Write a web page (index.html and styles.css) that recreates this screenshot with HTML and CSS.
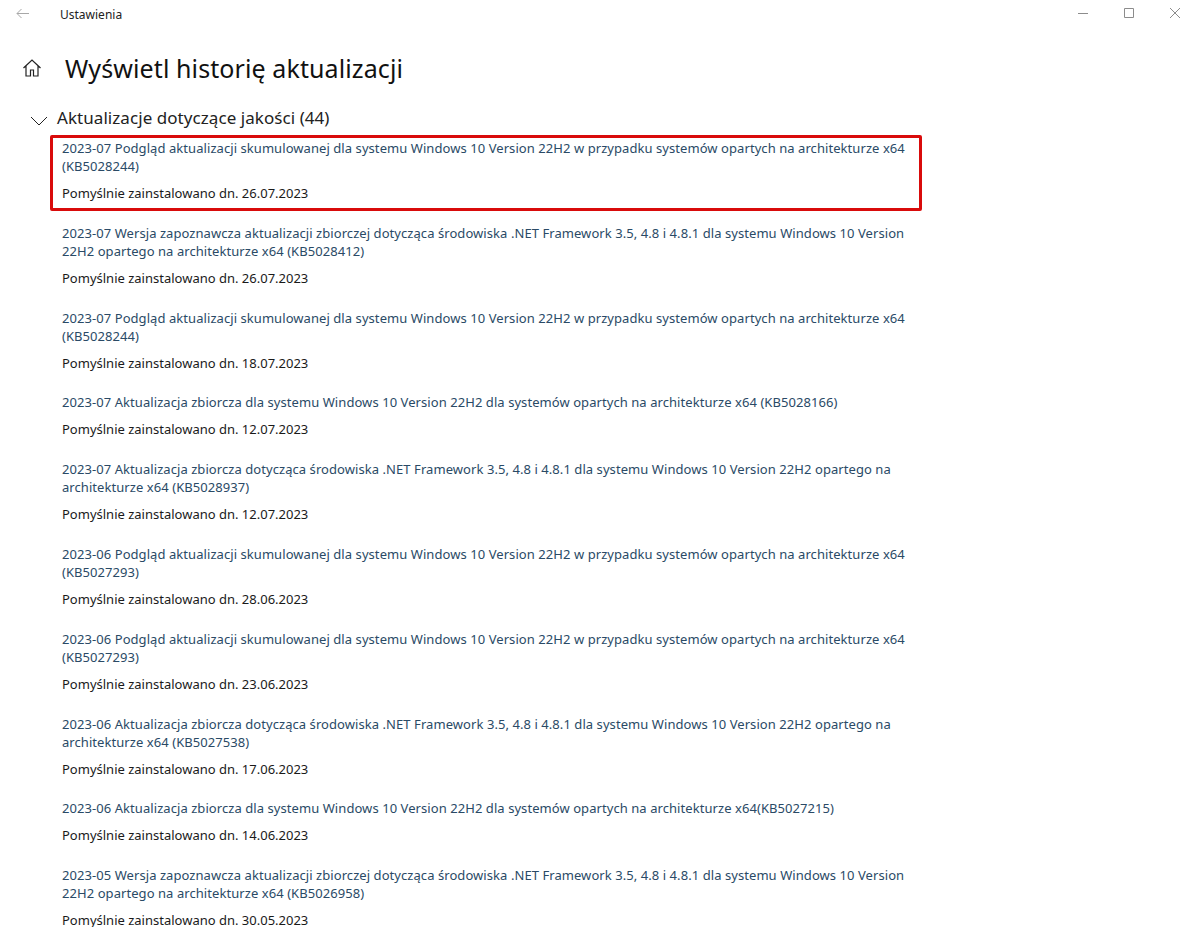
FILE: index.html
```html
<!DOCTYPE html>
<html lang="pl">
<head>
    <meta charset="UTF-8">
    <title>Ustawienia</title>
    <link rel="stylesheet" href="styles.css">
</head>
<body>

<div class="titlebar">
    <svg class="back-icon" width="14" height="12" viewBox="0 0 14 12"><path d="M5.500 1 1 5.500 5.500 10M1 5.500H13"/></svg>
    <span class="app-name">Ustawienia</span>
    <div class="window-btns">
        <svg width="12" height="12" viewBox="0 0 12 12"><path d="M1 6.500H11"/></svg>
        <svg width="12" height="12" viewBox="0 0 12 12"><path d="M1.500 1.500H10.500V10.500H1.500Z"/></svg>
        <svg width="12" height="12" viewBox="0 0 12 12"><path d="M1 1 11 11M11 1 1 11"/></svg>
    </div>
</div>

<div class="page-head">
    <svg class="home-icon" width="20" height="20" viewBox="0 0 20 20"><path d="M1.500 10 10 2l8.500 8M4 8v10h4.500v-6h3v6H16V8"/></svg>
    <h1>Wyświetl historię aktualizacji</h1>
</div>

<div class="group-head">
    <svg class="chevron" width="18" height="10" viewBox="0 0 18 10"><path d="M1 1l8 8 8-8"/></svg>
    <h2>Aktualizacje dotyczące jakości (44)</h2>
</div>

<div class="update-list">
    <div class="update-item marked">
        <a class="update-link">2023-07 Podgląd aktualizacji skumulowanej dla systemu Windows 10 Version 22H2 w przypadku systemów opartych na architekturze x64 (KB5028244)</a>
        <p class="update-status">Pomyślnie zainstalowano dn. 26.07.2023</p>
    </div>
    <div class="update-item">
        <a class="update-link">2023-07 Wersja zapoznawcza aktualizacji zbiorczej dotycząca środowiska .NET Framework 3.5, 4.8 i 4.8.1 dla systemu Windows 10 Version 22H2 opartego na architekturze x64 (KB5028412)</a>
        <p class="update-status">Pomyślnie zainstalowano dn. 26.07.2023</p>
    </div>
    <div class="update-item">
        <a class="update-link">2023-07 Podgląd aktualizacji skumulowanej dla systemu Windows 10 Version 22H2 w przypadku systemów opartych na architekturze x64 (KB5028244)</a>
        <p class="update-status">Pomyślnie zainstalowano dn. 18.07.2023</p>
    </div>
    <div class="update-item">
        <a class="update-link">2023-07 Aktualizacja zbiorcza dla systemu Windows 10 Version 22H2 dla systemów opartych na architekturze x64 (KB5028166)</a>
        <p class="update-status">Pomyślnie zainstalowano dn. 12.07.2023</p>
    </div>
    <div class="update-item">
        <a class="update-link">2023-07 Aktualizacja zbiorcza dotycząca środowiska .NET Framework 3.5, 4.8 i 4.8.1 dla systemu Windows 10 Version 22H2 opartego na architekturze x64 (KB5028937)</a>
        <p class="update-status">Pomyślnie zainstalowano dn. 12.07.2023</p>
    </div>
    <div class="update-item">
        <a class="update-link">2023-06 Podgląd aktualizacji skumulowanej dla systemu Windows 10 Version 22H2 w przypadku systemów opartych na architekturze x64 (KB5027293)</a>
        <p class="update-status">Pomyślnie zainstalowano dn. 28.06.2023</p>
    </div>
    <div class="update-item">
        <a class="update-link">2023-06 Podgląd aktualizacji skumulowanej dla systemu Windows 10 Version 22H2 w przypadku systemów opartych na architekturze x64 (KB5027293)</a>
        <p class="update-status">Pomyślnie zainstalowano dn. 23.06.2023</p>
    </div>
    <div class="update-item">
        <a class="update-link">2023-06 Aktualizacja zbiorcza dotycząca środowiska .NET Framework 3.5, 4.8 i 4.8.1 dla systemu Windows 10 Version 22H2 opartego na architekturze x64 (KB5027538)</a>
        <p class="update-status">Pomyślnie zainstalowano dn. 17.06.2023</p>
    </div>
    <div class="update-item">
        <a class="update-link">2023-06 Aktualizacja zbiorcza dla systemu Windows 10 Version 22H2 dla systemów opartych na architekturze x64(KB5027215)</a>
        <p class="update-status">Pomyślnie zainstalowano dn. 14.06.2023</p>
    </div>
    <div class="update-item">
        <a class="update-link">2023-05 Wersja zapoznawcza aktualizacji zbiorczej dotycząca środowiska .NET Framework 3.5, 4.8 i 4.8.1 dla systemu Windows 10 Version 22H2 opartego na architekturze x64 (KB5026958)</a>
        <p class="update-status">Pomyślnie zainstalowano dn. 30.05.2023</p>
    </div>
</div>

</body>
</html>
```

FILE: styles.css
```css
body {
    margin: 0;
    height: 927px;
    overflow: hidden;
    background: white;
    color: black;
    font-family: "Noto Sans", sans-serif;
}
svg {
    fill: none;
    stroke-width: 1;
}
.titlebar {
    display: flex;
    align-items: center;
    height: 28px;
    padding-left: 16px;
}
.back-icon {
    stroke: #a8a8a8;
    margin-bottom: 1px;
}
.app-name {
    margin-left: 30px;
    font-size: 12px;
    color: #222;
}
.window-btns {
    display: flex;
    gap: 34px;
    margin-left: auto;
    margin-bottom: 2px;
    padding-right: 12px;
}
.window-btns svg {
    stroke: #8c8c8c;
}
.page-head {
    display: flex;
    align-items: center;
    height: 40px;
    margin-top: 20px;
    padding-left: 22px;
}
.home-icon {
    stroke: #222;
    stroke-width: 1.200;
}
h1 {
    margin: 0 0 0 23px;
    font-size: 25px;
    font-weight: 400;
    letter-spacing: 0.100px;
    color: #111;
}
.group-head {
    display: flex;
    align-items: center;
    height: 24px;
    margin-top: 17px;
    padding-left: 30px;
}
.chevron {
    stroke: #222;
    margin-top: 7px;
}
h2 {
    margin: 0 0 0 9px;
    font-size: 17px;
    font-weight: 400;
    letter-spacing: 0.060px;
    color: #222;
}
.update-list {
    margin-top: 10px;
    padding-left: 62px;
}
.update-item {
    width: 858px;
    padding-bottom: 21.800px;
}
.update-link {
    display: block;
    font-size: 13px;
    line-height: 18px;
    letter-spacing: 0.065px;
    color: #2a4a66;
}
.update-status {
    margin: 9px 0 0;
    font-size: 13px;
    line-height: 18px;
    color: #1a1a1a;
}
.marked {
    position: relative;
}
.marked::after {
    content: "";
    position: absolute;
    left: -12px;
    right: -2px;
    top: -4px;
    bottom: 13px;
    border: 3px solid #d90b0b;
    border-radius: 2px;
}
```
